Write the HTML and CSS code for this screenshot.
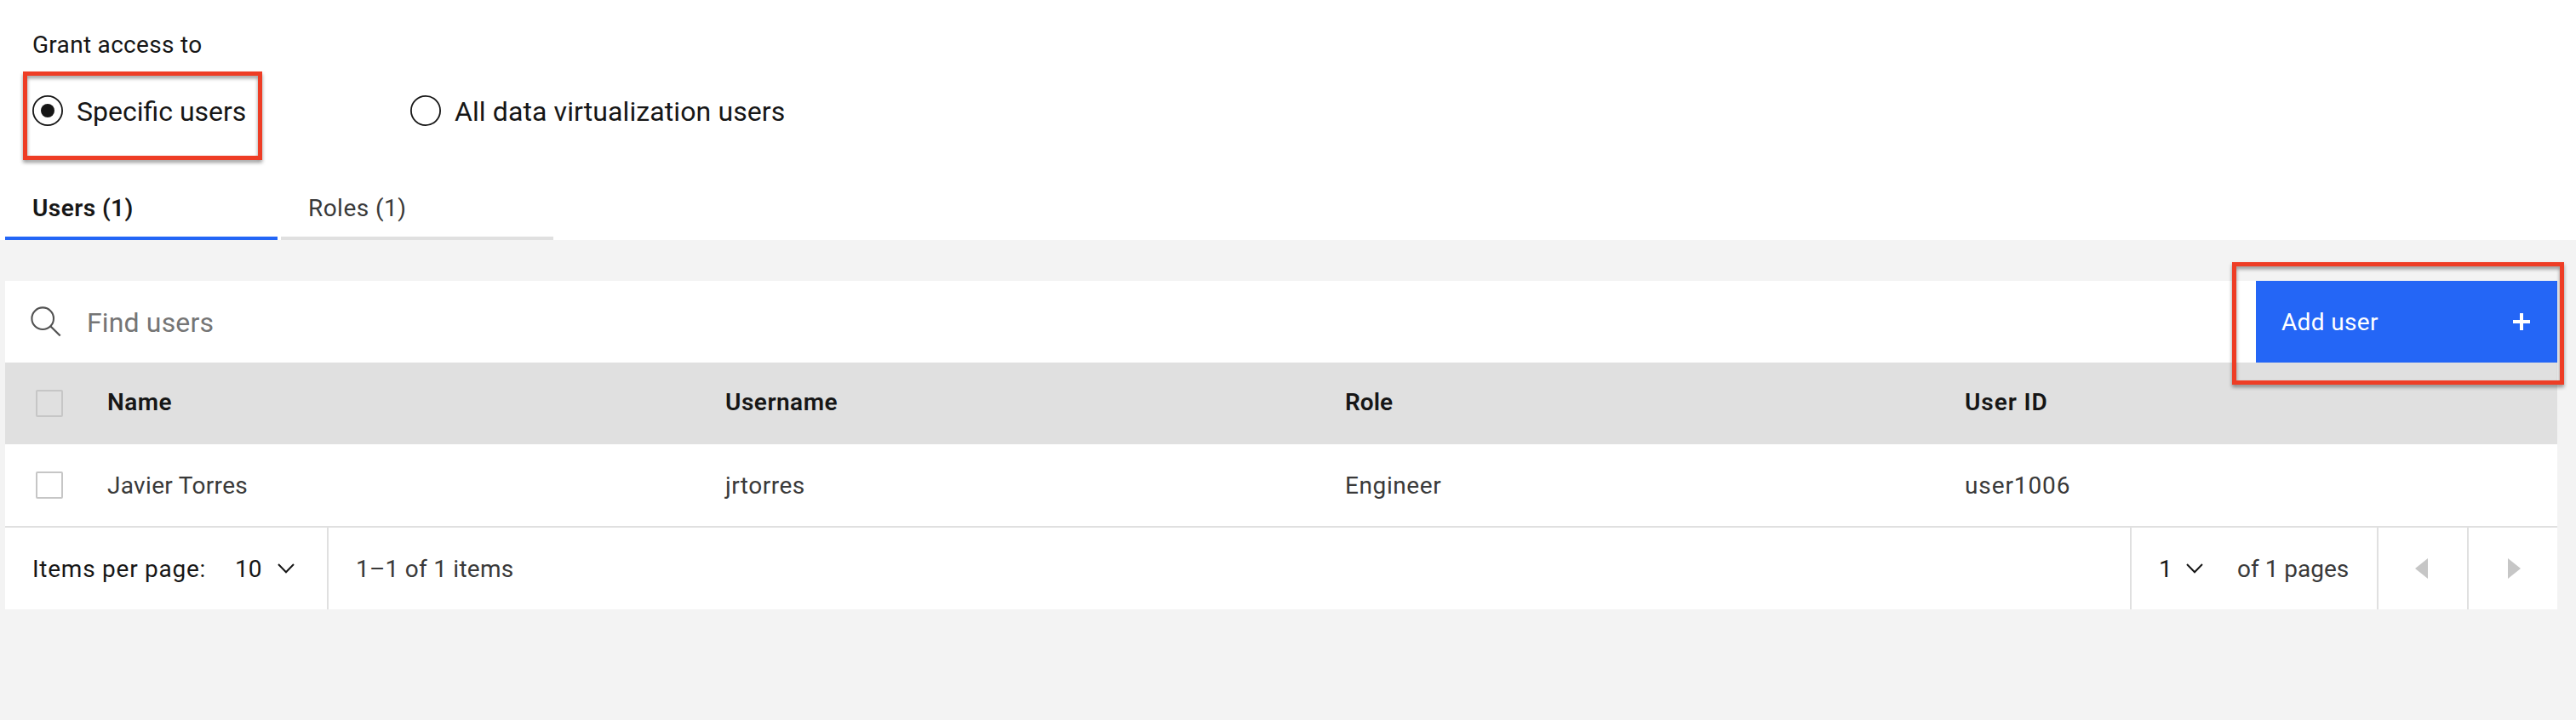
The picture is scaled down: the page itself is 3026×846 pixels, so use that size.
FILE: index.html
```html
<!DOCTYPE html>
<html lang="en">
<head>
<meta charset="utf-8">
<title>Grant access</title>
<link rel="stylesheet" href="styles.css">
</head>
<body>
<header class="access">
  <h1 class="legend">Grant access to</h1>
  <div class="radios">
    <label class="radio specific">
      <svg class="radio-icon" viewBox="0 0 36 36"><circle cx="18" cy="18" r="17.1" fill="none" stroke="#161616" stroke-width="1.8"/><circle cx="18" cy="18" r="8" fill="#161616"/></svg>
      <span>Specific users</span>
      <i class="highlight highlight-radio"></i>
    </label>
    <label class="radio all">
      <svg class="radio-icon" viewBox="0 0 36 36"><circle cx="18" cy="18" r="17.1" fill="none" stroke="#161616" stroke-width="1.8"/></svg>
      <span>All data virtualization users</span>
    </label>
  </div>
  <nav class="tabs">
    <div class="tab active">Users (1)</div>
    <div class="tab">Roles (1)</div>
  </nav>
</header>
<main class="panel">
  <div class="toolbar">
    <svg class="search-icon" viewBox="0 0 38 38"><circle cx="15.2" cy="15.2" r="12.8" fill="none" stroke="#525252" stroke-width="2.1"/><path d="M24 24 L35.7 35.5" stroke="#525252" stroke-width="2.3"/></svg>
    <span class="placeholder">Find users</span>
    <div class="add"><span class="add-label">Add user</span>
      <svg class="plus" viewBox="0 0 20 20"><path d="M8 0h4v8h8v4h-8v8H8v-8H0V8h8z" fill="#fff"/></svg>
      <i class="highlight highlight-add"></i>
    </div>
  </div>
  <div class="row head">
    <div class="check"><i class="box"></i></div>
    <div class="h-name">Name</div>
    <div class="h-username">Username</div>
    <div>Role</div>
    <div class="h-id">User ID</div>
  </div>
  <div class="row">
    <div class="check"><i class="box"></i></div>
    <div class="cell c-name">Javier Torres</div>
    <div class="cell c-username">jrtorres</div>
    <div class="cell c-role">Engineer</div>
    <div class="cell c-id">user1006</div>
  </div>
  <footer class="pagination">
    <div class="size">
      <span class="items">Items per page:</span>
      <span class="count">10</span>
      <svg class="chevron" viewBox="0 0 20 12"><path d="M1 1 L10 10.2 L19 1" fill="none" stroke="#161616" stroke-width="2"/></svg>
    </div>
    <div class="range"><span>1–1 of 1 items</span></div>
    <div class="page">
      <span class="number">1</span>
      <svg class="chevron" viewBox="0 0 20 12"><path d="M1 1 L10 10.2 L19 1" fill="none" stroke="#161616" stroke-width="2"/></svg>
      <span class="pages">of 1 pages</span>
    </div>
    <div class="nav prev"><svg class="caret" viewBox="0 0 15 24"><path d="M15 0v24L0 12z" fill="#c6c6c6"/></svg></div>
    <div class="nav next"><svg class="caret" viewBox="0 0 15 24"><path d="M0 0v24l15-12z" fill="#c6c6c6"/></svg></div>
  </footer>
</main>
</body>
</html>
```

FILE: styles.css
```css
* { box-sizing: border-box; }
body {
  margin: 0;
  height: 846px;
  background: #f3f3f3;
  color: #161616;
  font: 400 28px/36px Roboto, "Liberation Sans", sans-serif;
  white-space: nowrap;
}
svg { display: block; flex: none; }

.access { height: 282px; padding-top: 35px; background: #fff; }
.legend { margin: 0; padding-left: 38px; font-size: 28px; font-weight: 400; letter-spacing: 0.3px; }
.radios { display: flex; margin-top: 41px; padding-left: 38px; font-size: 32px; line-height: 38px; }
.radio { position: relative; display: flex; gap: 16px; height: 38px; }
.radio-icon { width: 36px; height: 36px; }
.specific { width: 444px; }
.all { letter-spacing: 0.1px; }
.tabs { display: flex; gap: 4px; margin-top: 56px; padding-left: 6px; }
.tab {
  width: 320px;
  height: 76px;
  padding: 21px 0 0 32px;
  border-bottom: 4px solid #e0e0e0;
  color: #393939;
  letter-spacing: 0.45px;
}
.tab.active { border-color: #2466f6; color: #161616; font-weight: 600; letter-spacing: 0.44px; }

.highlight {
  position: absolute;
  border: 5px solid #ee3d25;
  filter: drop-shadow(0 3px 2px rgba(0, 0, 0, 0.4));
}
.highlight-radio { left: -11px; top: -28px; width: 281px; height: 104px; }
.highlight-add { left: -28px; top: -22px; width: 390px; height: 144px; }

.panel { width: 2998px; margin: 48px 0 0 6px; background: #fff; }
.toolbar { display: flex; height: 96px; align-items: center; padding-left: 29px; }
.search-icon { width: 38px; height: 38px; }
.placeholder { margin-left: 29px; padding-top: 2px; color: #757575; font-size: 32px; letter-spacing: 0.15px; }
.add {
  position: relative;
  display: flex;
  align-items: center;
  justify-content: space-between;
  width: 354px;
  height: 96px;
  margin-left: auto;
  padding: 0 32px 0 30px;
  background: #2466f6;
  color: #fff;
  letter-spacing: 0.35px;
}
.add-label { padding-top: 2px; }
.plus { width: 20px; height: 20px; }

.row {
  display: grid;
  grid-template-columns: 120px 726px 728px 728px 1fr;
  align-items: center;
  height: 96px;
  color: #393939;
}
.head { padding-bottom: 3px; background: #e0e0e0; color: #161616; font-weight: 600; }
.check { padding-left: 36px; }
.box { display: block; width: 32px; height: 32px; border: 2px solid #c6c6c6; border-radius: 2px; }
.head .box { margin-top: 3px; }
.h-name { letter-spacing: 0.43px; }
.h-username { letter-spacing: 0.51px; }
.h-id { letter-spacing: 0.93px; }
.cell { padding-top: 2px; }
.c-name { letter-spacing: 0.32px; }
.c-username { letter-spacing: 0.5px; }
.c-role { letter-spacing: 0.6px; }
.c-id { letter-spacing: 0.9px; }

.pagination { display: flex; height: 98px; border-top: 2px solid #e0e0e0; color: #393939; }
.pagination > div { display: flex; align-items: center; }
.pagination span { padding-top: 2px; }
.size { width: 380px; padding-left: 32px; border-right: 2px solid #e0e0e0; color: #161616; }
.items { width: 238px; letter-spacing: 0.75px; }
.count { width: 50px; }
.chevron { width: 20px; height: 12px; }
.range { padding-left: 32px; letter-spacing: 0.25px; }
.page { width: 292px; margin-left: auto; padding-left: 32px; border: solid #e0e0e0; border-width: 0 2px; }
.number { width: 32px; color: #161616; }
.pages { margin-left: 40px; }
.nav { width: 104px; padding-left: 43px; }
.prev { width: 106px; border-right: 2px solid #e0e0e0; }
.next { padding-left: 46px; }
.caret { width: 15px; height: 24px; }
```
